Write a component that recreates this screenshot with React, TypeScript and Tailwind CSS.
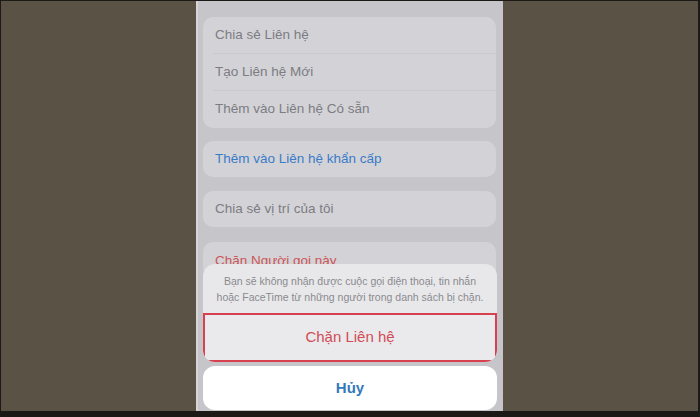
const font = { fontFamily: "'Liberation Sans', Arial, sans-serif" };

const Row = ({ label, last }: { label: string; last?: boolean }) => (
  <div className="relative h-[37px] flex items-center pl-3">
    <span className="text-[13.5px] text-[#7c7c82]">{label}</span>
    {!last && <div className="absolute bottom-0 left-[10px] right-0 h-px bg-[#cacace]" />}
  </div>
);

export default function App() {
  return (
    <div
      className="w-[700px] h-[417px] bg-[#5a5244] border-t border-l border-r-2 border-b-[6px] border-[#1c1a16] flex justify-center overflow-hidden"
      style={font}
    >
      <div className="relative w-[307px] h-[410px] bg-[#c6c6ca] border-l-2 border-[#d6d6d8] overflow-hidden">
        <div className="flex flex-col px-[5px] pt-4 pr-[7px]">
          <div className="rounded-[10px] bg-[#d3d3d7] flex flex-col">
            <Row label="Chia sẻ Liên hệ" />
            <Row label="Tạo Liên hệ Mới" />
            <Row label="Thêm vào Liên hệ Có sẵn" last />
          </div>
          <div className="mt-[13px] h-9 rounded-[10px] bg-[#d3d3d7] flex items-center pl-3">
            <span className="text-[13.5px] text-[#3a7bc6]">Thêm vào Liên hệ khẩn cấp</span>
          </div>
          <div className="mt-[14px] h-9 rounded-[10px] bg-[#d3d3d7] flex items-center pl-3">
            <span className="text-[13.5px] text-[#7c7c82]">Chia sẻ vị trí của tôi</span>
          </div>
          <div className="mt-[15px] h-9 rounded-[10px] bg-[#d3d3d7] flex items-start pt-[9px] pl-3">
            <span className="text-[13.5px] text-[#cc5558]">Chặn Người gọi này</span>
          </div>
        </div>

        <div className="absolute left-[5px] right-[6px] bottom-[1px] flex flex-col gap-1">
          <div className="rounded-[12px] bg-[#e8e8ea] overflow-hidden flex flex-col">
            <div className="h-[49px] flex flex-col items-center justify-center text-center text-[10.5px] leading-[16px] text-[#8a8a8f]">
              <span>Bạn sẽ không nhận được cuộc gọi điện thoại, tin nhắn</span>
              <span>hoặc FaceTime từ những người trong danh sách bị chặn.</span>
            </div>
            <div className="h-[49px] border-[2.5px] border-[#d6404f] bg-[#eaeaec] flex items-center justify-center">
              <span className="text-[15px] text-[#d14c57]">Chặn Liên hệ</span>
            </div>
          </div>
          <div className="h-11 rounded-[12px] bg-white flex items-center justify-center">
            <span className="text-[15px] font-bold text-[#3479bb]">Hủy</span>
          </div>
        </div>
      </div>
    </div>
  );
}
